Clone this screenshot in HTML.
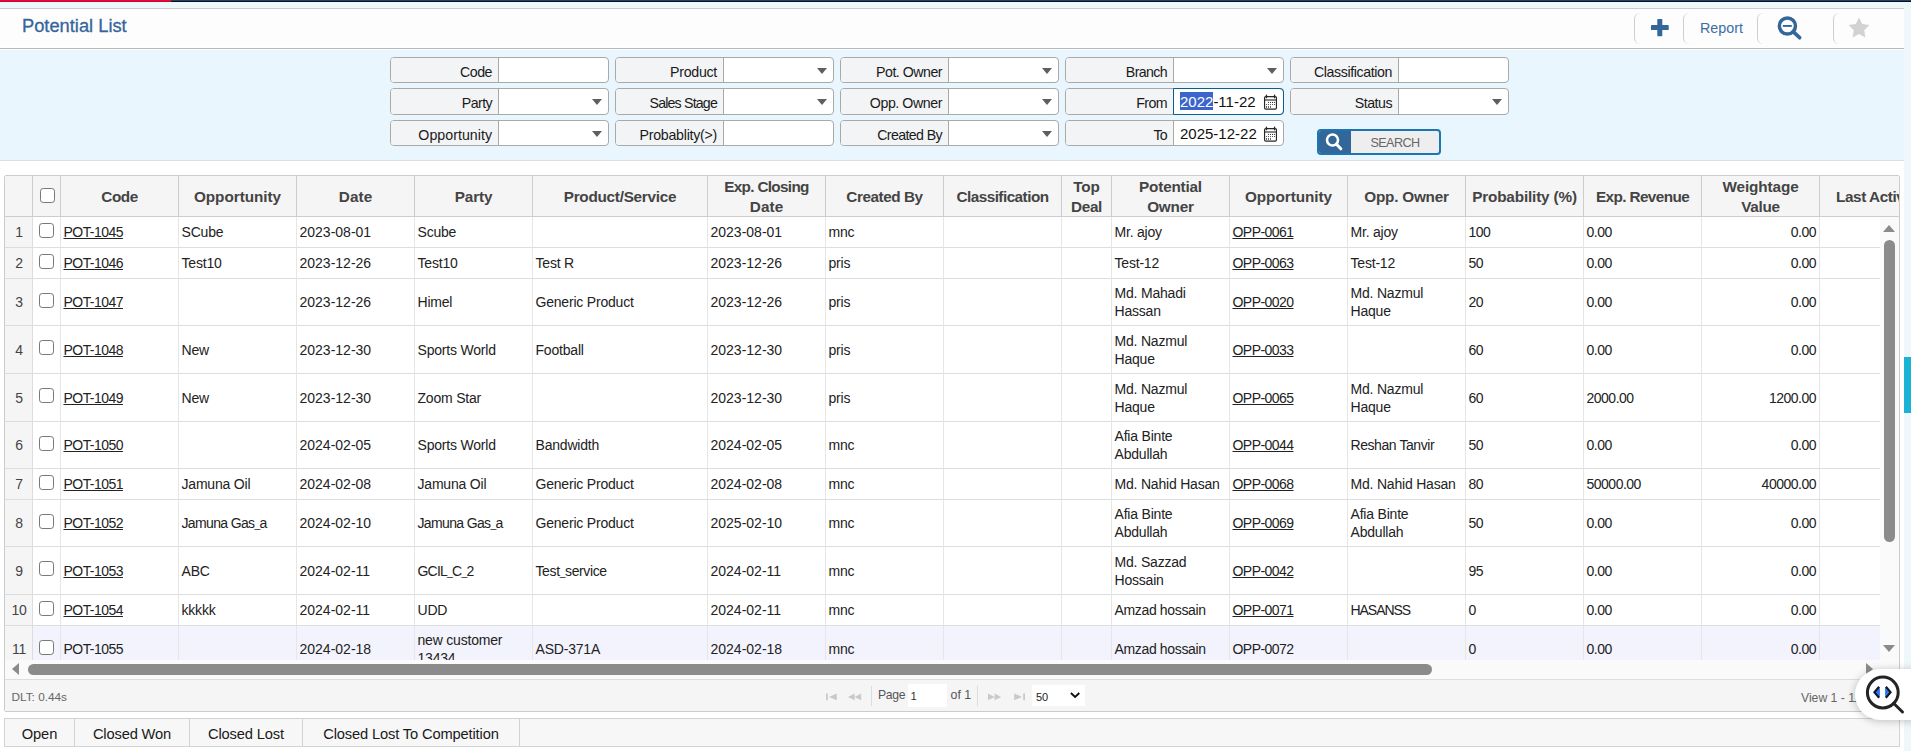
<!DOCTYPE html>
<html><head><meta charset="utf-8"><title>Potential List</title>
<style>
*{box-sizing:border-box;}
html,body{margin:0;padding:0;}
body{width:1911px;height:751px;overflow:hidden;position:relative;background:#fff;font-family:"Liberation Sans",sans-serif;font-size:14px;color:#222;}
.abs{position:absolute;}
/* top strip */
#t0r{left:0;top:0;width:171px;height:1px;background:#d90d3e;}
#t0n{left:171px;top:0;width:1740px;height:1px;background:#2c4059;}
#t1r{left:0;top:1px;width:171px;height:1px;background:#d60030;}
#t1n{left:171px;top:1px;width:1740px;height:1px;background:#00112b;}
#pagebg{left:0;top:2px;width:1911px;height:749px;background:#eef7fa;}
#main{left:0;top:8px;width:1904px;height:743px;background:#fff;border-top:1px solid #ccc;}
#hdrbg{left:0;top:9px;width:1904px;height:38px;background:#fdfdfd;}
#fwl{left:0;top:49px;width:1904px;height:1px;background:#f8fdff;}
#hdrline{left:0;top:48px;width:1904px;height:1px;background:#b9b9b9;}
#title{left:22px;top:15px;font-size:18.3px;line-height:22px;color:#34659b;white-space:nowrap;-webkit-text-stroke:0.3px #34659b;}
#filter{left:0;top:49px;width:1904px;height:111px;background:#eaf6fd;}
#filterline{left:0;top:160px;width:1904px;height:1px;background:#ddd;}
#cyan{left:1904px;top:357px;width:7px;height:56px;background:#1ab3d5;}
/* toolbar */
.tb{position:absolute;top:13px;height:31px;border-left:1px solid #cfcfcf;border-radius:6px;}
#report{left:1700px;top:18px;font-size:14.3px;line-height:20px;color:#3a6ea5;}
/* filter fields */
.f{position:absolute;width:219px;height:26px;border:1px solid #a9a9a9;border-radius:4px;background:#fff;overflow:hidden;}
.f .l{position:absolute;left:0;top:0;width:108px;height:100%;background:#f3f4f6;border-right:1px solid #a9a9a9;text-align:right;padding-right:6px;font-size:14.2px;line-height:28px;color:#1a1a1a;white-space:nowrap;}
.f .a{position:absolute;right:6px;top:10px;width:0;height:0;border-left:5px solid transparent;border-right:5px solid transparent;border-top:6px solid #5f5f5f;}
.f .v{position:absolute;left:114px;top:1px;font-size:15px;line-height:24px;color:#111;white-space:nowrap;}
.f.focus{overflow:visible;}
#fromfocus{left:1173px;top:88px;width:111px;height:27px;border:1.5px solid #0b5f8a;border-radius:0 4px 4px 0;}
#sel{left:1180px;top:92px;width:33px;height:18px;background:#3b64cc;}
/* search button */
#sbtn{left:1317px;top:129px;width:124px;height:26px;border:2px solid #1b76b3;border-radius:4px;background:#eee;overflow:hidden;}
#sbtn .i{position:absolute;left:0;top:0;width:32px;height:22px;background:#336699;}
#sbtn .t{position:absolute;left:32px;top:0;width:88px;text-align:center;font-size:12.6px;letter-spacing:-0.55px;line-height:24px;color:#666;}
/* grid */
#gwrap{left:4px;top:175px;width:1896px;height:537px;border:1px solid #ccc;border-radius:2px;background:#fff;}
#ghead{position:absolute;left:5px;top:176px;width:1894px;height:41px;overflow:hidden;background:#f5f5f5;border-bottom:1px solid #ccc;}
#gbody{position:absolute;left:5px;top:217px;width:1875px;height:443px;overflow:hidden;background:#fff;}
table.g{border-collapse:separate;border-spacing:0;table-layout:fixed;width:1933px;font-family:"Liberation Sans",sans-serif;font-size:14px;font-weight:normal;font-style:normal;color:#222;line-height:17.6px;text-align:left;white-space:nowrap;}
table.g th{height:40px;padding:0;border-right:1px solid #ccc;font-weight:bold;font-size:15.3px;line-height:20px;padding-top:1px;color:#444;text-align:center;vertical-align:middle;background:#f5f5f5;overflow:hidden;white-space:nowrap;}
table.g td{padding:2px 2px 0 2.5px;border-right:1px solid #e6e6e6;border-bottom:1px solid #ddd;vertical-align:middle;line-height:17.6px;white-space:nowrap;overflow:hidden;color:#222;letter-spacing:-0.2px;}
table.g td.rn{background:#f5f5f5;text-align:center;padding:2px 0 0 1px;color:#444;border-right:1px solid #ddd;}
table.g td.cb{padding:0;text-align:center;line-height:0;font-size:0;}
table.g td.r{text-align:right;padding-right:3px;}
table.g td.n{letter-spacing:-0.5px;}
tr.hov td{background:#f3f3fd;}
tr.hov td.rn{background:#f5f5f5;}
.lk{text-decoration:underline;letter-spacing:-0.55px;}
table.g td.d{letter-spacing:0;}
.lk.nu{text-decoration:none;}
.cbx{display:block;width:15px;height:15px;margin:0 auto;border:1.3px solid #787878;border-radius:3.2px;background:#fff;position:relative;top:-2px;left:0;}
.cbx.hcb{top:-1.9px;left:0.8px;}
/* scrollbars */
#vtrack{left:1880px;top:217px;width:19px;height:443px;background:#fafafa;}
#vthumb{left:1884px;top:240px;width:11px;height:302px;border-radius:5.5px;background:#8b8b8b;}
.tri{position:absolute;width:0;height:0;}
#vup{left:1883px;top:225px;border-left:6.5px solid transparent;border-right:6.5px solid transparent;border-bottom:7px solid #8b8b8b;}
#vdn{left:1883px;top:645px;border-left:6.5px solid transparent;border-right:6.5px solid transparent;border-top:7px solid #8b8b8b;}
#htrack{left:5px;top:660px;width:1894px;height:19px;background:#fafafa;}
#hthumb{left:28px;top:664px;width:1404px;height:11px;border-radius:5.5px;background:#8b8b8b;}
#hlt{left:12px;top:663px;border-top:6.5px solid transparent;border-bottom:6.5px solid transparent;border-right:7px solid #8b8b8b;}
#hrt{left:1866px;top:663px;border-top:6.5px solid transparent;border-bottom:6.5px solid transparent;border-left:7px solid #8b8b8b;}
/* pager */
#pager{left:5px;top:679px;width:1894px;height:32px;background:#f5f5f5;border-top:1px solid #ddd;}
.pt{position:absolute;font-size:12.5px;line-height:16px;color:#666;white-space:nowrap;}
.psep{position:absolute;top:686px;width:1px;height:20px;background:#ddd;}
.pw{position:absolute;background:#fff;}
/* tabs */
#tabs{left:4px;top:718px;width:1896px;height:29px;background:#f7f7f7;border:1px solid #d3d3d3;}
.tab{position:absolute;top:719px;height:27px;border-right:1px solid #d3d3d3;font-size:14.7px;letter-spacing:-0.15px;line-height:30px;color:#1a1a1a;text-align:center;white-space:nowrap;}
/* floating */
#float{left:1855px;top:669px;width:80px;height:51px;border-radius:25.5px;background:#fff;box-shadow:0 1px 9px rgba(0,0,0,.24);}

</style></head>
<body>
<div class="abs" id="pagebg"></div>
<div class="abs" id="t0r"></div><div class="abs" id="t0n"></div><div class="abs" id="t1r"></div><div class="abs" id="t1n"></div>
<div class="abs" id="main"></div>
<div class="abs" id="hdrbg"></div><div class="abs" id="hdrline"></div>
<div class="abs" id="title">Potential List</div>
<div class="tb" style="left:1634px;width:12px"></div>
<div class="tb" style="left:1683px;width:12px"></div>
<div class="tb" style="left:1757px;width:12px"></div>
<div class="tb" style="left:1833px;width:12px"></div>
<svg class="abs" style="left:1651px;top:19px" width="18" height="18" viewBox="0 0 18 18"><rect x="6.3" y="0" width="5" height="17.2" rx="0.7" fill="#336699"/><rect x="0" y="6.1" width="17.7" height="5" rx="0.7" fill="#336699"/></svg>
<div class="abs" id="report">Report</div>
<svg class="abs" style="left:1776px;top:15px" width="28" height="28" viewBox="0 0 28 28"><circle cx="11.4" cy="10.95" r="8.05" fill="none" stroke="#336699" stroke-width="3.5"/><path d="M17.1 16.7L23.6 22.7" stroke="#336699" stroke-width="3.7" stroke-linecap="round"/><path d="M6.85 10.95h8.95" stroke="#336699" stroke-width="1.9"/></svg>
<svg class="abs" style="left:1848px;top:17px" width="22" height="21" viewBox="0 0 22 21"><path d="M11 0.5l3.2 6.6 7.2 1-5.2 5.1 1.2 7.2L11 17l-6.4 3.4 1.2-7.2L0.6 8.1l7.2-1z" fill="#d2d2d2"/></svg>
<div class="abs" id="filter"></div>
<div class="abs" id="filterline"></div><div class="abs" id="fwl"></div>
<div class="abs" id="cyan"></div>
<!-- filter row 1 -->
<div class="f" style="left:390px;top:57px"><div class="l" style="letter-spacing:-0.49px">Code</div></div>
<div class="f" style="left:615px;top:57px"><div class="l" style="letter-spacing:-0.28px">Product</div><div class="a"></div></div>
<div class="f" style="left:840px;top:57px"><div class="l" style="letter-spacing:-0.5px">Pot. Owner</div><div class="a"></div></div>
<div class="f" style="left:1065px;top:57px"><div class="l" style="letter-spacing:-0.63px">Branch</div><div class="a"></div></div>
<div class="f" style="left:1290px;top:57px"><div class="l" style="letter-spacing:-0.4px">Classification</div></div>
<!-- filter row 2 -->
<div class="f" style="left:390px;top:88px;height:27px"><div class="l" style="letter-spacing:-0.59px">Party</div><div class="a"></div></div>
<div class="f" style="left:615px;top:88px;height:27px"><div class="l" style="letter-spacing:-0.82px">Sales Stage</div><div class="a"></div></div>
<div class="f" style="left:840px;top:88px;height:27px"><div class="l" style="letter-spacing:-0.43px">Opp. Owner</div><div class="a"></div></div>
<div class="f" style="left:1065px;top:88px;height:27px"><div class="l" style="letter-spacing:-0.58px">From</div></div>
<div class="f" style="left:1290px;top:88px;height:27px"><div class="l" style="letter-spacing:-0.49px">Status</div><div class="a"></div></div>
<!-- filter row 3 -->
<div class="f" style="left:390px;top:120px"><div class="l" style="letter-spacing:0.03px">Opportunity</div><div class="a"></div></div>
<div class="f" style="left:615px;top:120px"><div class="l" style="letter-spacing:-0.26px">Probablity(&gt;)</div></div>
<div class="f" style="left:840px;top:120px"><div class="l" style="letter-spacing:-0.61px">Created By</div><div class="a"></div></div>
<div class="f" style="left:1065px;top:120px"><div class="l" style="letter-spacing:-0.75px">To</div><div class="v">2025-12-22</div></div>
<div class="abs" id="fromfocus"></div>
<div class="abs" id="sel"></div>
<div class="abs" style="left:1180px;top:90px;font-size:15px;line-height:24px;white-space:nowrap;color:#111"><span style="color:#fff">2022</span>-11-22</div>
<svg class="abs cal" style="left:1263px;top:94px" width="15" height="17" viewBox="0 0 15 17"><rect x="1.55" y="2.55" width="11.9" height="12.6" rx="1.3" fill="#fff" stroke="#262626" stroke-width="1.15"/><path d="M1.5 6h12" stroke="#262626" stroke-width="1.1"/><path d="M3.45 1.1v2.6M11.55 1.1v2.6" stroke="#262626" stroke-width="1.3" stroke-linecap="round"/><g fill="#3a3a3a"><circle cx="5.45" cy="8.4" r="0.55"/><circle cx="7.5" cy="8.4" r="0.55"/><circle cx="9.5" cy="8.4" r="0.55"/><circle cx="11.5" cy="8.4" r="0.55"/><circle cx="3.45" cy="10.45" r="0.55"/><circle cx="5.45" cy="10.45" r="0.55"/><circle cx="7.5" cy="10.45" r="0.55"/><circle cx="9.5" cy="10.45" r="0.55"/><circle cx="11.5" cy="10.45" r="0.55"/><rect x="3" y="12.1" width="0.9" height="1.7"/><rect x="5" y="12.1" width="0.9" height="1.7"/><rect x="7.05" y="12.1" width="0.9" height="1.7"/></g></svg>
<svg class="abs cal" style="left:1263px;top:125.5px" width="15" height="17" viewBox="0 0 15 17"><rect x="1.55" y="2.55" width="11.9" height="12.6" rx="1.3" fill="#fff" stroke="#262626" stroke-width="1.15"/><path d="M1.5 6h12" stroke="#262626" stroke-width="1.1"/><path d="M3.45 1.1v2.6M11.55 1.1v2.6" stroke="#262626" stroke-width="1.3" stroke-linecap="round"/><g fill="#3a3a3a"><circle cx="5.45" cy="8.4" r="0.55"/><circle cx="7.5" cy="8.4" r="0.55"/><circle cx="9.5" cy="8.4" r="0.55"/><circle cx="11.5" cy="8.4" r="0.55"/><circle cx="3.45" cy="10.45" r="0.55"/><circle cx="5.45" cy="10.45" r="0.55"/><circle cx="7.5" cy="10.45" r="0.55"/><circle cx="9.5" cy="10.45" r="0.55"/><circle cx="11.5" cy="10.45" r="0.55"/><rect x="3" y="12.1" width="0.9" height="1.7"/><rect x="5" y="12.1" width="0.9" height="1.7"/><rect x="7.05" y="12.1" width="0.9" height="1.7"/></g></svg>
<div class="abs" id="sbtn"><div class="i"><svg style="position:absolute;left:5px;top:1px" width="20" height="20" viewBox="0 0 20 20"><circle cx="8.5" cy="8" r="5.5" fill="none" stroke="#fff" stroke-width="2.6"/><path d="M12.5 12.2L16.8 16.8" stroke="#fff" stroke-width="3" stroke-linecap="round"/></svg></div><div class="t">SEARCH</div></div>
<div class="abs" id="gwrap"></div>
<div id="ghead"><table class="g"><colgroup><col style="width:28px"><col style="width:28px"><col style="width:118px"><col style="width:118px"><col style="width:118px"><col style="width:118px"><col style="width:175px"><col style="width:118px"><col style="width:118px"><col style="width:118px"><col style="width:50px"><col style="width:118px"><col style="width:118px"><col style="width:118px"><col style="width:118px"><col style="width:118px"><col style="width:118px"><col style="width:118px"></colgroup><tr><th class="c-rn"><div></div></th><th class="c-cb" style="line-height:0;font-size:0"><span class="cbx hcb"></span></th><th class="c-code"><div><span style="letter-spacing:-0.46px">Code</span></div></th><th class="c-opp"><div><span style="letter-spacing:-0.04px">Opportunity</span></div></th><th class="c-date"><div><span style="letter-spacing:0.08px">Date</span></div></th><th class="c-party"><div><span style="letter-spacing:-0.13px">Party</span></div></th><th class="c-prod"><div><span style="letter-spacing:-0.26px">Product/Service</span></div></th><th class="c-ecd"><div><span style="letter-spacing:-0.67px">Exp. Closing</span><br><span style="letter-spacing:0.08px">Date</span></div></th><th class="c-cby"><div><span style="letter-spacing:-0.44px">Created By</span></div></th><th class="c-cls"><div><span style="letter-spacing:-0.53px">Classification</span></div></th><th class="c-top"><div><span style="letter-spacing:-0.13px">Top</span><br><span style="letter-spacing:-0.28px">Deal</span></div></th><th class="c-pown"><div><span style="letter-spacing:-0.2px">Potential</span><br><span style="letter-spacing:-0.18px">Owner</span></div></th><th class="c-oppc"><div><span style="letter-spacing:-0.04px">Opportunity</span></div></th><th class="c-oown"><div><span style="letter-spacing:-0.24px">Opp. Owner</span></div></th><th class="c-prob"><div><span style="letter-spacing:-0.16px">Probability (%)</span></div></th><th class="c-rev"><div><span style="letter-spacing:-0.6px">Exp. Revenue</span></div></th><th class="c-wv"><div><span style="letter-spacing:-0.11px">Weightage</span><br><span style="letter-spacing:-0.28px">Value</span></div></th><th class="c-la"><div><span style="letter-spacing:-0.42px">Last Activity</span></div></th></tr></table></div>
<div id="gbody"><table class="g"><colgroup><col style="width:28px"><col style="width:28px"><col style="width:118px"><col style="width:118px"><col style="width:118px"><col style="width:118px"><col style="width:175px"><col style="width:118px"><col style="width:118px"><col style="width:118px"><col style="width:50px"><col style="width:118px"><col style="width:118px"><col style="width:118px"><col style="width:118px"><col style="width:118px"><col style="width:118px"><col style="width:118px"></colgroup>
<tr style="height:31px"><td class="rn">1</td><td class="cb"><span class="cbx"></span></td><td><span class="lk">POT-1045</span></td><td>SCube</td><td class="d">2023-08-01</td><td>Scube</td><td></td><td class="d">2023-08-01</td><td>mnc</td><td></td><td></td><td>Mr. ajoy</td><td><span class="lk">OPP-0061</span></td><td>Mr. ajoy</td><td class="n">100</td><td class="n">0.00</td><td class="r n">0.00</td><td></td></tr>
<tr style="height:31px"><td class="rn">2</td><td class="cb"><span class="cbx"></span></td><td><span class="lk">POT-1046</span></td><td>Test10</td><td class="d">2023-12-26</td><td>Test10</td><td>Test R</td><td class="d">2023-12-26</td><td>pris</td><td></td><td></td><td>Test-12</td><td><span class="lk">OPP-0063</span></td><td>Test-12</td><td class="n">50</td><td class="n">0.00</td><td class="r n">0.00</td><td></td></tr>
<tr style="height:47px"><td class="rn">3</td><td class="cb"><span class="cbx"></span></td><td><span class="lk">POT-1047</span></td><td></td><td class="d">2023-12-26</td><td>Himel</td><td>Generic Product</td><td class="d">2023-12-26</td><td>pris</td><td></td><td></td><td>Md. Mahadi<br>Hassan</td><td><span class="lk">OPP-0020</span></td><td>Md. Nazmul<br>Haque</td><td class="n">20</td><td class="n">0.00</td><td class="r n">0.00</td><td></td></tr>
<tr style="height:48px"><td class="rn">4</td><td class="cb"><span class="cbx"></span></td><td><span class="lk">POT-1048</span></td><td>New</td><td class="d">2023-12-30</td><td>Sports World</td><td>Football</td><td class="d">2023-12-30</td><td>pris</td><td></td><td></td><td>Md. Nazmul<br>Haque</td><td><span class="lk">OPP-0033</span></td><td></td><td class="n">60</td><td class="n">0.00</td><td class="r n">0.00</td><td></td></tr>
<tr style="height:48px"><td class="rn">5</td><td class="cb"><span class="cbx"></span></td><td><span class="lk">POT-1049</span></td><td>New</td><td class="d">2023-12-30</td><td>Zoom Star</td><td></td><td class="d">2023-12-30</td><td>pris</td><td></td><td></td><td>Md. Nazmul<br>Haque</td><td><span class="lk">OPP-0065</span></td><td>Md. Nazmul<br>Haque</td><td class="n">60</td><td class="n">2000.00</td><td class="r n">1200.00</td><td></td></tr>
<tr style="height:47px"><td class="rn">6</td><td class="cb"><span class="cbx"></span></td><td><span class="lk">POT-1050</span></td><td></td><td class="d">2024-02-05</td><td>Sports World</td><td>Bandwidth</td><td class="d">2024-02-05</td><td>mnc</td><td></td><td></td><td>Afia Binte<br>Abdullah</td><td><span class="lk">OPP-0044</span></td><td><span style="letter-spacing:-0.43px">Reshan Tanvir</span></td><td class="n">50</td><td class="n">0.00</td><td class="r n">0.00</td><td></td></tr>
<tr style="height:31px"><td class="rn">7</td><td class="cb"><span class="cbx"></span></td><td><span class="lk">POT-1051</span></td><td>Jamuna Oil</td><td class="d">2024-02-08</td><td>Jamuna Oil</td><td>Generic Product</td><td class="d">2024-02-08</td><td>mnc</td><td></td><td></td><td>Md. Nahid Hasan</td><td><span class="lk">OPP-0068</span></td><td>Md. Nahid Hasan</td><td class="n">80</td><td class="n">50000.00</td><td class="r n">40000.00</td><td></td></tr>
<tr style="height:47px"><td class="rn">8</td><td class="cb"><span class="cbx"></span></td><td><span class="lk">POT-1052</span></td><td><span style="letter-spacing:-0.65px">Jamuna Gas<span style="font-size:10.4px;line-height:0">_</span>a</span></td><td class="d">2024-02-10</td><td><span style="letter-spacing:-0.65px">Jamuna Gas<span style="font-size:10.4px;line-height:0">_</span>a</span></td><td>Generic Product</td><td class="d">2025-02-10</td><td>mnc</td><td></td><td></td><td>Afia Binte<br>Abdullah</td><td><span class="lk">OPP-0069</span></td><td>Afia Binte<br>Abdullah</td><td class="n">50</td><td class="n">0.00</td><td class="r n">0.00</td><td></td></tr>
<tr style="height:48px"><td class="rn">9</td><td class="cb"><span class="cbx"></span></td><td><span class="lk">POT-1053</span></td><td>ABC</td><td class="d">2024-02-11</td><td><span style="letter-spacing:-0.78px">GCIL<span style="font-size:10.4px;line-height:0">_</span>C<span style="font-size:10.4px;line-height:0">_</span>2</span></td><td><span style="letter-spacing:-0.38px">Test<span style="font-size:10.4px;line-height:0">_</span>service</span></td><td class="d">2024-02-11</td><td>mnc</td><td></td><td></td><td>Md. Sazzad<br>Hossain</td><td><span class="lk">OPP-0042</span></td><td></td><td class="n">95</td><td class="n">0.00</td><td class="r n">0.00</td><td></td></tr>
<tr style="height:31px"><td class="rn">10</td><td class="cb"><span class="cbx"></span></td><td><span class="lk">POT-1054</span></td><td>kkkkk</td><td class="d">2024-02-11</td><td>UDD</td><td></td><td class="d">2024-02-11</td><td>mnc</td><td></td><td></td><td><span style="letter-spacing:-0.35px">Amzad hossain</span></td><td><span class="lk">OPP-0071</span></td><td><span style="letter-spacing:-1.05px">HASANSS</span></td><td class="n">0</td><td class="n">0.00</td><td class="r n">0.00</td><td></td></tr>
<tr class="hov" style="height:47px"><td class="rn">11</td><td class="cb"><span class="cbx"></span></td><td><span class="lk nu">POT-1055</span></td><td></td><td class="d">2024-02-18</td><td>new customer<br>13434</td><td>ASD-371A</td><td class="d">2024-02-18</td><td>mnc</td><td></td><td></td><td><span style="letter-spacing:-0.35px">Amzad hossain</span></td><td><span class="lk nu">OPP-0072</span></td><td></td><td class="n">0</td><td class="n">0.00</td><td class="r n">0.00</td><td></td></tr>
</table></div>
<div class="abs" id="vtrack"></div><div class="abs" id="vthumb"></div><div class="tri" id="vup"></div><div class="tri" id="vdn"></div>
<div class="abs" id="htrack"></div><div class="abs" id="hthumb"></div><div class="tri" id="hlt"></div><div class="tri" id="hrt"></div>
<div class="abs" id="pager"></div>
<div class="pt" style="left:11.5px;top:689px;font-size:11.8px">DLT: 0.44s</div>
<svg class="abs" style="left:826px;top:693px" width="12" height="8" viewBox="0 0 12 8"><path d="M0 0.6h1.8v6.6H0zM10.8 0.6v6.6L3 3.9z" fill="#c9c9c9"/></svg>
<svg class="abs" style="left:848px;top:693px" width="14" height="8" viewBox="0 0 14 8"><path d="M6.6 0.6v6.6L0 3.9zM13.2 0.6v6.6L6.6 3.9z" fill="#c9c9c9"/></svg>
<div class="psep" style="left:871px"></div>
<div class="pt" style="left:878px;top:687px;font-size:12.2px;letter-spacing:-0.35px;color:#555">Page</div>
<div class="pw" style="left:908px;top:684px;width:39px;height:23px"></div>
<div class="pt" style="left:910.5px;top:688.2px;font-size:11.3px;color:#333">1</div>
<div class="pt" style="left:950.5px;top:687px;font-size:12.4px;color:#555">of 1</div>
<div class="psep" style="left:977px"></div>
<svg class="abs" style="left:988px;top:693px" width="14" height="8" viewBox="0 0 14 8"><path d="M0 0.6v6.6L6.6 3.9zM6.6 0.6v6.6L13.2 3.9z" fill="#c9c9c9"/></svg>
<svg class="abs" style="left:1014px;top:693px" width="12" height="8" viewBox="0 0 12 8"><path d="M9.2 0.6h1.8v6.6H9.2zM0.2 0.6v6.6L8 3.9z" fill="#c9c9c9"/></svg>
<div class="pw" style="left:1032px;top:685px;width:53px;height:21px"></div>
<div class="pt" style="left:1036px;top:688.7px;font-size:11px;color:#222">50</div>
<svg class="abs" style="left:1070px;top:692px" width="11" height="7" viewBox="0 0 11 7"><path d="M0.9 1l4.2 4L9.3 1" fill="none" stroke="#111" stroke-width="1.9"/></svg>
<div class="pt" style="left:1801px;top:689.5px;font-size:12.2px">View 1 - 11 of 11</div>
<div class="abs" id="tabs"></div>
<div class="tab" style="left:5px;width:70px">Open</div>
<div class="tab" style="left:75px;width:115px">Closed Won</div>
<div class="tab" style="left:190px;width:113px">Closed Lost</div>
<div class="tab" style="left:303px;width:217px">Closed Lost To Competition</div>
<div class="abs" id="float"></div>
<svg class="abs" style="left:1863px;top:673px" width="46" height="46" viewBox="0 0 46 46"><circle cx="19.8" cy="19.5" r="15.4" fill="#fff" stroke="#242424" stroke-width="3"/><path d="M30.6 30.3L39.5 39" stroke="#242424" stroke-width="3" stroke-linecap="round"/><path d="M16.9 15.2L13.2 19.3L16.9 23.4z" fill="#1a73ff"/><path d="M22.1 15.2L25.8 19.3L22.1 23.4z" fill="#1a73ff"/><path d="M16.2 13.9L11.6 19.3L16.2 24.7" fill="none" stroke="#0b1733" stroke-width="2.4"/><path d="M22.8 13.9L27.4 19.3L22.8 24.7" fill="none" stroke="#0b1733" stroke-width="2.4"/></svg>
</body></html>
